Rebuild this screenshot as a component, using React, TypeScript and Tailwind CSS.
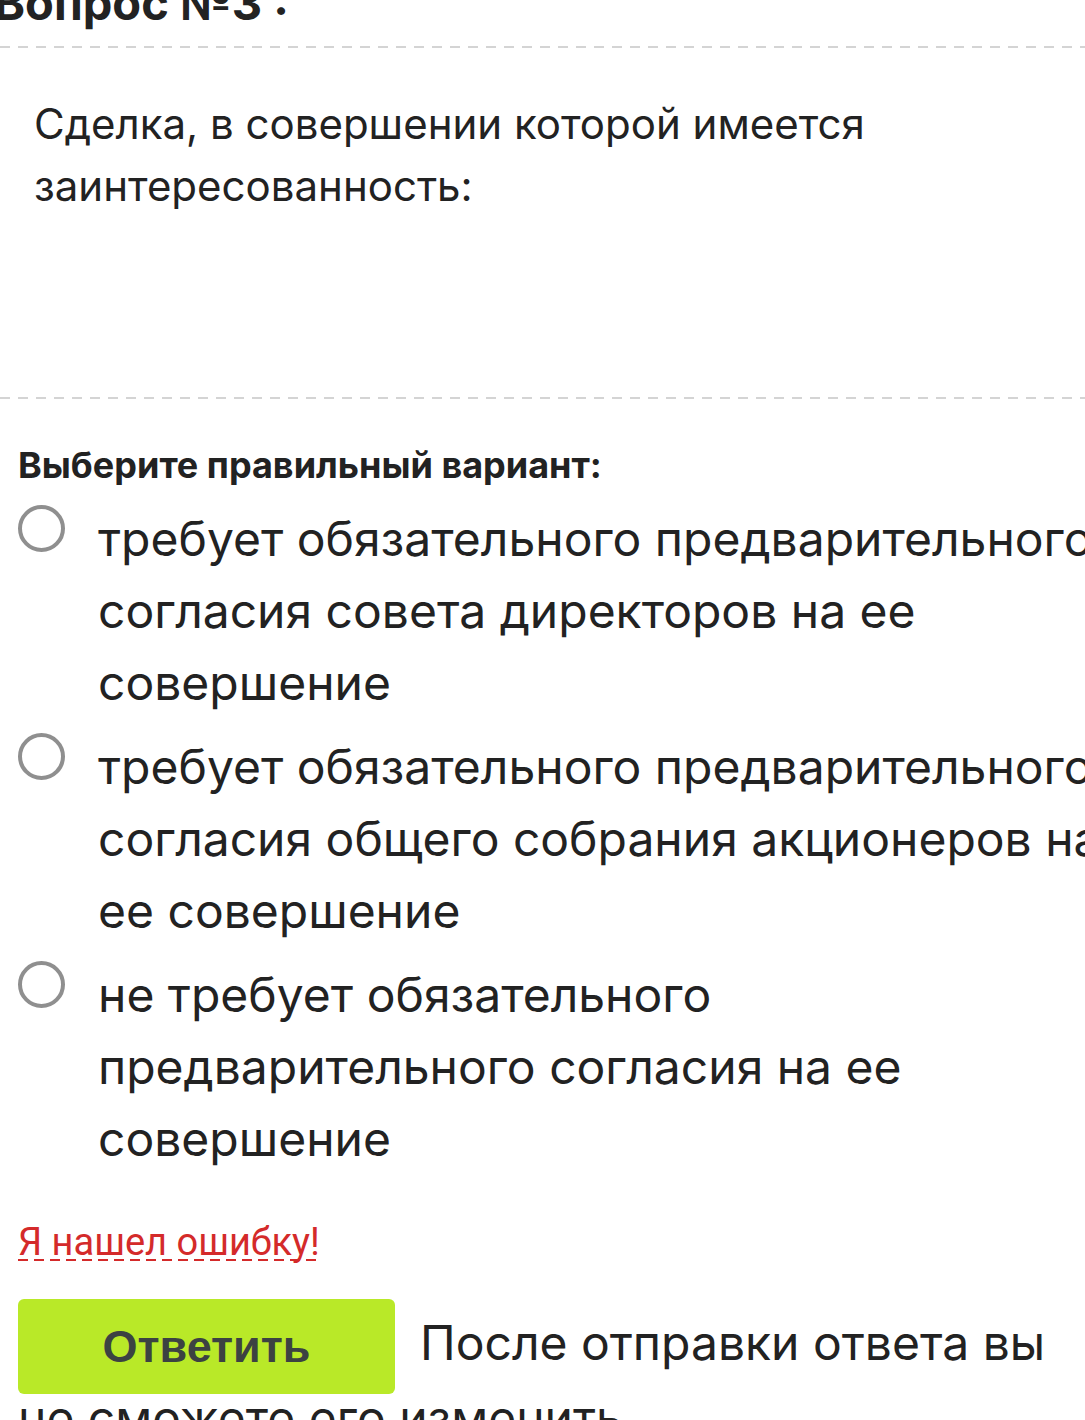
import React, { useState } from 'react';

const options = [
  'требует обязательного предварительного согласия совета директоров на ее совершение',
  'требует обязательного предварительного согласия общего собрания акционеров на ее совершение',
  'не требует обязательного предварительного согласия на ее совершение',
];

// пунктирная линия-разделитель
const Divider = () => (
  <div className="h-[2px] w-full bg-[repeating-linear-gradient(to_right,#d4d4d4_0_10px,transparent_10px_18px)]" />
);

const Radio: React.FC<{ checked: boolean }> = ({ checked }) => (
  <span className="mt-[2px] flex h-[47px] w-[47px] shrink-0 items-center justify-center rounded-full border-[4px] border-[#8f8f8f] bg-white">
    {checked && <span className="h-[23px] w-[23px] rounded-full bg-[#6b6b6b]" />}
  </span>
);

export default function App() {
  const [selected, setSelected] = useState<number | null>(null);

  return (
    <div
      className="h-[1420px] w-[1085px] overflow-hidden bg-white text-[#222]"
      style={{ fontFamily: 'Inter, "Noto Sans", sans-serif' }}
    >
      <h2 className="-ml-[6px] -mt-[23px] text-[47px] font-bold leading-[52px] text-[#222]">
        Вопрос №3 :
      </h2>

      <div className="mt-[17px]">
        <Divider />
      </div>

      <div className="w-[1000px] pl-[34px] pt-[45px] text-[42px] leading-[62px] text-[#222]">
        Сделка, в совершении которой имеется заинтересованность:
      </div>

      <div className="mt-[180px]">
        <Divider />
      </div>

      <div className="pl-[18px]">
        <div className="mt-[44px] text-[36px] font-bold leading-[44px] text-[#222]">
          Выберите правильный вариант:
        </div>

        <div className="mt-[16px] flex flex-col gap-[12px]">
          {options.map((text, i) => (
            <label
              key={i}
              className="flex cursor-pointer items-start"
              onClick={() => setSelected(i)}
            >
              <Radio checked={selected === i} />
              <span className="ml-[33px] w-[1020px] shrink-0 text-[48px] leading-[72px] text-[#222]">
                {text}
              </span>
            </label>
          ))}
        </div>

        <div className="mt-[48px] flex">
          <a
            href="#"
            className="inline-block bg-[repeating-linear-gradient(to_right,#d42a2a_0_10px,transparent_10px_16px)] bg-[length:100%_2px] bg-bottom bg-no-repeat text-[38px] leading-[38px] text-[#d42a2a]"
            style={{ fontFamily: 'Roboto, "Liberation Sans", sans-serif' }}
          >
            Я нашел ошибку!
          </a>
        </div>

        <div className="mt-[46px] w-[1060px] text-[48px] leading-[72px] text-[#222]">
          <button
            className="-my-[12px] mr-[25px] inline-flex h-[95px] w-[377px] items-center justify-center rounded-[6px] bg-[#b9e928] align-middle text-[45px] font-bold text-[#3c4242]"
            style={{ fontFamily: '"Liberation Sans", Arial, sans-serif' }}
          >
            Ответить
          </button>
          После отправки ответа вы не сможете его изменить
        </div>
      </div>
    </div>
  );
}
